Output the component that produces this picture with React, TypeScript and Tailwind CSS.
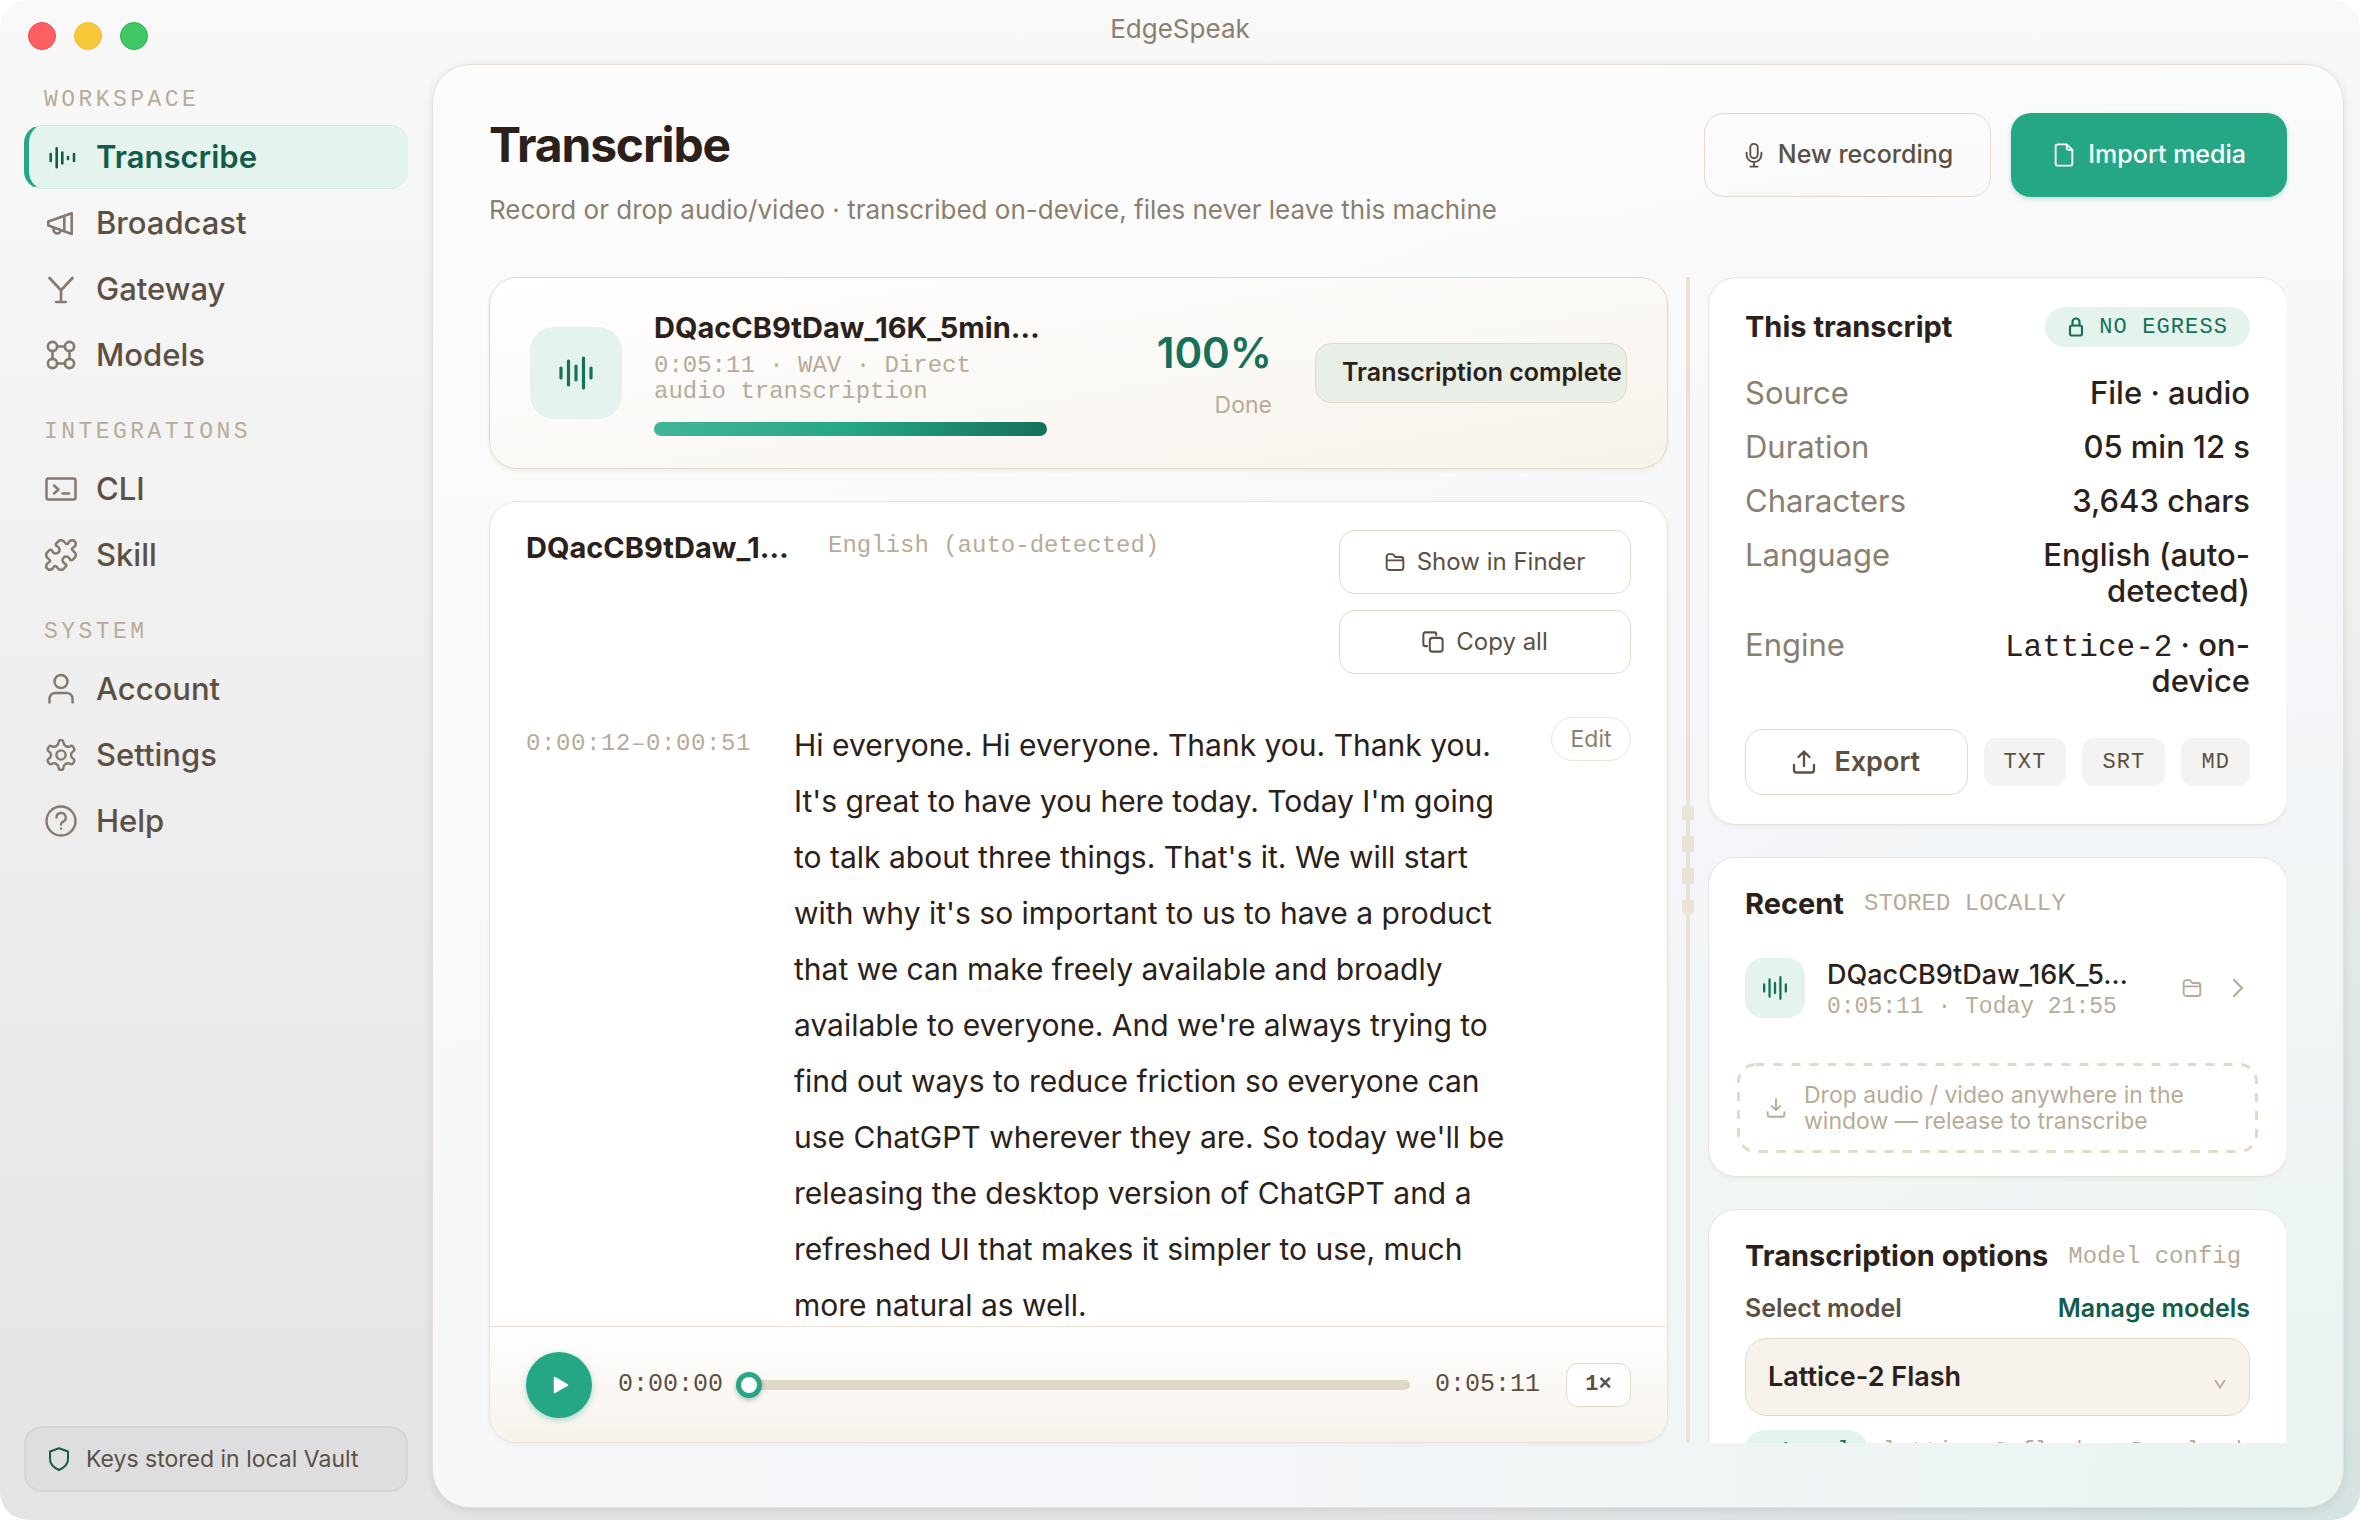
import React from "react";

type IconProps = { className?: string };

const base = {
  fill: "none",
  stroke: "currentColor",
  strokeLinecap: "round" as const,
  strokeLinejoin: "round" as const,
  "aria-hidden": true,
};

const WaveSmall = ({ className }: IconProps) => (
  <svg {...base} viewBox="0 0 32 32" strokeWidth="2.6" className={className}>
    <path d="M5.700 13v7M11.700 7.300v19M17.300 11.500v11M23 16v2M29 13v7" />
  </svg>
);

const Wave = ({ className }: IconProps) => (
  <svg {...base} viewBox="0 0 36 36" strokeWidth="3.2" className={className}>
    <path d="M3 13v10M10.500 6v24M18 11v14M25.500 3v30M33 13v10" />
  </svg>
);

const Megaphone = ({ className }: IconProps) => (
  <svg {...base} viewBox="0 0 32 32" strokeWidth="2.6" className={className}>
    <path d="M26.700 6.300v20.700L3.300 18.500v-4zM19.300 9v15.300" />
    <path d="M8.600 20.800v1.700a3.600 3.600 0 0 0 7.200.700" />
  </svg>
);

const GatewayIcon = ({ className }: IconProps) => (
  <svg {...base} viewBox="0 0 32 32" strokeWidth="2.7" className={className}>
    <path d="M4.500 5 16 17.200 27.500 5M16 17.200V29M11.200 29h9.600" />
  </svg>
);

const ModelsIcon = ({ className }: IconProps) => (
  <svg {...base} viewBox="0 0 32 32" strokeWidth="2.600" className={className}>
    <circle cx="7.500" cy="7.500" r="4.600" />
    <circle cx="24.500" cy="7.500" r="4.600" />
    <circle cx="7.500" cy="24.500" r="4.600" />
    <circle cx="24.500" cy="24.500" r="4.600" />
    <path d="M12 7.500h8M12 24.500h8M7.500 12v8M24.500 12v8" />
  </svg>
);

const TerminalIcon = ({ className }: IconProps) => (
  <svg {...base} viewBox="0 0 32 32" strokeWidth="2.500" className={className}>
    <rect x="1.500" y="5.500" width="29" height="21" rx="2" />
    <path d="m9 12.500 4.500 4-4.500 4M17.500 20.500h6.500" />
  </svg>
);

const PuzzleIcon = ({ className }: IconProps) => (
  <svg {...base} viewBox="1.2 1.2 21.600 21.600" strokeWidth="1.700" className={className}>
    <path d="M19.439 7.850c-.049.322.059.648.289.878l1.568 1.568c.470.470.706 1.087.706 1.704s-.235 1.233-.706 1.704l-1.611 1.611a.980.980 0 0 1-.837.276c-.470-.070-.802-.480-.968-.925a2.501 2.501 0 1 0-3.214 3.214c.446.166.855.497.925.968a.979.979 0 0 1-.276.837l-1.610 1.610a2.404 2.404 0 0 1-1.705.707 2.402 2.402 0 0 1-1.704-.706l-1.568-1.568a1.026 1.026 0 0 0-.877-.290c-.493.074-.840.504-1.020.968a2.500 2.500 0 1 1-3.237-3.237c.464-.180.894-.527.967-1.020a1.026 1.026 0 0 0-.289-.877l-1.568-1.568A2.402 2.402 0 0 1 1.998 12c0-.617.236-1.234.706-1.704L4.230 8.770c.240-.240.581-.353.917-.303.515.077.877.528 1.073 1.010a2.500 2.500 0 1 0 3.259-3.259c-.482-.196-.933-.558-1.010-1.073-.050-.336.062-.676.303-.917l1.525-1.525A2.402 2.402 0 0 1 12 1.998c.617 0 1.234.236 1.704.706l1.568 1.568c.230.230.556.338.877.290.493-.074.840-.504 1.020-.968a2.500 2.500 0 1 1 3.237 3.237c-.464.180-.894.527-.967 1.020Z" />
  </svg>
);

const UserIcon = ({ className }: IconProps) => (
  <svg {...base} viewBox="0 0 32 32" strokeWidth="2.500" className={className}>
    <circle cx="16" cy="8.500" r="6.500" />
    <path d="M4.500 29.500v-4a5.500 5.500 0 0 1 5.500-5.500h12a5.500 5.500 0 0 1 5.500 5.500v4" />
  </svg>
);

const GearIcon = ({ className }: IconProps) => (
  <svg {...base} viewBox="0 0 32 32" strokeWidth="2.400" className={className}>
    <circle cx="16" cy="16" r="4.600" />
    <path d="M13.600 3.400a2.400 2.400 0 0 1 4.800 0c.1 1.800.9 2.900 2.300 3.700s2.800.900 4.300.200a2.500 2.500 0 0 1 3.400.900l.5.900a2.500 2.500 0 0 1-.9 3.400c-1.400.900-2 2-2 3.500s.600 2.600 2 3.500a2.500 2.500 0 0 1 .9 3.400l-.5.900a2.500 2.500 0 0 1-3.400.900c-1.500-.700-2.900-.600-4.300.200s-2.200 1.900-2.300 3.700a2.400 2.400 0 0 1-4.800 0c-.1-1.800-.9-2.900-2.300-3.700s-2.800-.900-4.300-.200a2.500 2.500 0 0 1-3.400-.900l-.5-.900a2.500 2.500 0 0 1 .9-3.400c1.400-.900 2-2 2-3.500s-.600-2.600-2-3.500a2.500 2.500 0 0 1-.9-3.400l.5-.900a2.500 2.500 0 0 1 3.400-.900c1.500.700 2.900.600 4.300-.200s2.200-1.900 2.300-3.700Z" />
  </svg>
);

const HelpIcon = ({ className }: IconProps) => (
  <svg {...base} viewBox="0 0 32 32" strokeWidth="2.400" className={className}>
    <circle cx="16" cy="16" r="14.500" />
    <path d="M11.500 12.500a4.600 4.600 0 1 1 6.700 4.100c-1.500.800-2.200 1.400-2.200 2.900M16 23.500v.100" />
  </svg>
);

const ShieldIcon = ({ className }: IconProps) => (
  <svg {...base} viewBox="0 0 24 24" strokeWidth="2" className={className}>
    <path d="m12 1.300 9 3.200v7.500c0 5-3.500 8.500-9 11-5.500-2.500-9-6-9-11v-7.500z" />
  </svg>
);

const MicIcon = ({ className }: IconProps) => (
  <svg {...base} viewBox="0 0 24 28" strokeWidth="2" className={className}>
    <rect x="8" y="2" width="8" height="15.500" rx="4" />
    <path d="M4 11.500v2a8 8 0 0 0 16 0v-2M12 22v4M8 26.500h8" />
  </svg>
);

const FileIcon = ({ className }: IconProps) => (
  <svg {...base} viewBox="0 0 24 28" strokeWidth="2" className={className}>
    <path d="M15 2.500H5a2 2 0 0 0-2 2v19a2 2 0 0 0 2 2h14a2 2 0 0 0 2-2V8.500zV6.500a2 2 0 0 0 2 2H21" />
  </svg>
);

const FolderIcon = ({ className }: IconProps) => (
  <svg {...base} viewBox="0 0 24 24" strokeWidth="2.300" className={className}>
    <path d="M2 18.500v-13a3 3 0 0 1 3-3h3.500a2 2 0 0 1 1.600.800l1.400 1.900a2 2 0 0 0 1.600.800H19a3 3 0 0 1 3 3v9.500a3 3 0 0 1-3 3H5a3 3 0 0 1-3-3ZM2 10h20" />
  </svg>
);

const CopyIcon = ({ className }: IconProps) => (
  <svg {...base} viewBox="0 0 24 24" strokeWidth="2.200" className={className}>
    <rect x="8.500" y="7.500" width="14" height="15" rx="3" />
    <path d="M5.500 16.500h-2a2 2 0 0 1-2-2v-11a2 2 0 0 1 2-2h10a2 2 0 0 1 2 2v1" />
  </svg>
);

const LockIcon = ({ className }: IconProps) => (
  <svg {...base} viewBox="0 0 18 20" strokeWidth="2.200" className={className}>
    <rect x="3" y="8.500" width="12" height="10" rx="2" />
    <path d="M5.500 8.500V5a3.500 3.500 0 0 1 7 0v3.500" />
  </svg>
);

const UploadIcon = ({ className }: IconProps) => (
  <svg {...base} viewBox="0 0 24 24" strokeWidth="2.300" className={className}>
    <path d="M12 16V2M6.500 7 12 1.500 17.500 7M2 15v5a2.500 2.500 0 0 0 2.500 2.500h15A2.500 2.500 0 0 0 22 20v-5" />
  </svg>
);

const DownloadIcon = ({ className }: IconProps) => (
  <svg {...base} viewBox="0 0 24 24" strokeWidth="2.300" className={className}>
    <path d="M12 1.500v12.500M7 9.500l5 5 5-5M2 17v3a2.500 2.500 0 0 0 2.500 2.500h15A2.500 2.500 0 0 0 22 20v-3" />
  </svg>
);

const ChevronIcon = ({ className }: IconProps) => (
  <svg {...base} viewBox="0 0 12 20" strokeWidth="2.200" className={className}>
    <path d="m2 2 8 8-8 8" />
  </svg>
);

const navGroups = [
  {
    label: "WORKSPACE",
    items: [
      { name: "Transcribe", Icon: WaveSmall, active: true },
      { name: "Broadcast", Icon: Megaphone, active: false },
      { name: "Gateway", Icon: GatewayIcon, active: false },
      { name: "Models", Icon: ModelsIcon, active: false },
    ],
  },
  {
    label: "INTEGRATIONS",
    items: [
      { name: "CLI", Icon: TerminalIcon, active: false },
      { name: "Skill", Icon: PuzzleIcon, active: false },
    ],
  },
  {
    label: "SYSTEM",
    items: [
      { name: "Account", Icon: UserIcon, active: false },
      { name: "Settings", Icon: GearIcon, active: false },
      { name: "Help", Icon: HelpIcon, active: false },
    ],
  },
];

const mono = "font-['Liberation_Mono',monospace]";

function Sidebar() {
  return (
    <aside className="flex w-[432px] shrink-0 flex-col px-6 pb-4">
      <nav className="flex flex-col gap-8 pt-[23px]">
        {navGroups.map((group) => (
          <section key={group.label}>
            <h2 className={`${mono} mb-3 px-5 text-[23px] leading-[26px] tracking-[0.15em] text-[#b8ab98]`}>
              {group.label}
            </h2>
            <ul className="flex flex-col gap-0.5">
              {group.items.map(({ name, Icon, active }) => (
                <li key={name}>
                  <a
                    href="#"
                    aria-current={active ? "page" : undefined}
                    className={
                      active
                        ? "flex h-16 items-center gap-[19px] rounded-[18px] border-y border-l-[5px] border-y-[#d3ece4] border-l-[#25a786] bg-[#e5f3ee] pl-4 text-[31px] font-semibold text-[#125c49]"
                        : "flex h-16 items-center gap-[19px] pl-[21px] text-[31px] font-medium text-[#5c5044]"
                    }
                  >
                    <Icon className={active ? "size-8" : "size-8 text-[#857a6d]"} />
                    {name}
                  </a>
                </li>
              ))}
            </ul>
          </section>
        ))}
      </nav>
      <div className="mt-auto flex h-[66px] items-center gap-[15px] rounded-[18px] border-2 border-[#d5d5d7] bg-[#dedee1] px-[21px] text-[23px] text-[#5c5044]">
        <ShieldIcon className="size-6 text-[#125c49]" />
        Keys stored in local Vault
      </div>
    </aside>
  );
}

function StatusCard() {
  return (
    <section className="flex h-48 shrink-0 items-center rounded-[28px] border border-[#e3d9c8] bg-linear-to-br from-white via-[#fbf9f6] to-[#f7f2ea] px-10 shadow-[0_2px_4px_rgba(60,40,20,0.06)]">
      <div className="flex size-[92px] shrink-0 items-center justify-center rounded-3xl bg-[#e5f3ee] text-[#16715a]">
        <Wave className="size-9" />
      </div>
      <div className="ml-8 w-[393px] shrink-0">
        <h2 className="text-[29px] leading-[36px] font-bold whitespace-nowrap">DQacCB9tDaw_16K_5min…</h2>
        <p className={`${mono} mt-[7px] text-[24px] leading-[26px] text-[#b8ab98]`}>
          0:05:11 · WAV · Direct audio transcription
        </p>
        <div
          role="progressbar"
          aria-label="Transcription progress"
          aria-valuenow={100}
          className="mt-[17px] h-3.5 rounded-full bg-linear-to-r from-[#42b497] via-[#25a786] to-[#16715a]"
        />
      </div>
      <div className="ml-auto text-right">
        <div className="text-[42px] leading-[52px] font-semibold text-[#16715a]">100%</div>
        <div className="mt-3 text-[23px] leading-[28px] text-[#b8ab98]">Done</div>
      </div>
      <div className="ml-[43px] flex h-[60px] w-[312px] shrink-0 items-center rounded-2xl border border-[#e3d9c8] bg-[#e8efe7] pl-[26px] text-[25px] font-semibold whitespace-nowrap">
        Transcription complete
      </div>
    </section>
  );
}

function Player() {
  return (
    <div className="flex h-[116px] shrink-0 items-center border-t border-[#ebe1d6] bg-linear-to-b from-white to-[#f7f2eb] px-9">
      <button
        type="button"
        aria-label="Play"
        className="flex size-[66px] shrink-0 items-center justify-center rounded-full bg-[#25a786] text-white shadow-[0_2px_6px_rgba(37,167,134,0.4)]"
      >
        <svg viewBox="0 0 16 18" className="ml-1 h-[18px] w-4" aria-hidden="true">
          <path d="M1.500 1.500v15L14.500 9z" fill="currentColor" stroke="currentColor" strokeWidth="1.500" strokeLinejoin="round" />
        </svg>
      </button>
      <span className={`${mono} ml-[26px] text-[25px] text-[#5c5044]`}>0:00:00</span>
      <input
        type="range"
        aria-label="Playback position"
        min={0}
        max={311}
        defaultValue={0}
        className="mx-[13px] h-7 min-w-0 flex-1 appearance-none bg-transparent [&::-webkit-slider-runnable-track]:h-2.5 [&::-webkit-slider-runnable-track]:rounded-full [&::-webkit-slider-runnable-track]:bg-[#e2d8c8] [&::-webkit-slider-thumb]:-mt-2 [&::-webkit-slider-thumb]:size-[26px] [&::-webkit-slider-thumb]:appearance-none [&::-webkit-slider-thumb]:rounded-full [&::-webkit-slider-thumb]:border-[5px] [&::-webkit-slider-thumb]:border-solid [&::-webkit-slider-thumb]:border-[#25a786] [&::-webkit-slider-thumb]:bg-white [&::-webkit-slider-thumb]:shadow-[0_2px_5px_rgba(0,0,0,0.25)]"
      />
      <span className={`${mono} ml-3 text-[25px] text-[#5c5044]`}>0:05:11</span>
      <button
        type="button"
        className={`${mono} ml-[26px] h-11 w-[65px] rounded-xl border border-[#e3d9c8] bg-white text-[22px] font-bold text-[#5c5044]`}
      >
        1×
      </button>
    </div>
  );
}

function TranscriptCard() {
  return (
    <section className="flex min-h-0 flex-1 flex-col overflow-hidden rounded-[28px] border border-[#ebe3d8] bg-white shadow-[0_2px_4px_rgba(60,40,20,0.05)]">
      <header className="flex items-start px-9 pt-7">
        <h2 className="w-[266px] shrink-0 text-[29px] leading-[36px] font-bold whitespace-nowrap">DQacCB9tDaw_1…</h2>
        <p className={`${mono} ml-9 text-[24px] leading-[32px] text-[#b8ab98]`}>English (auto-detected)</p>
        <div className="ml-auto flex w-[292px] shrink-0 flex-col gap-4">
          <button
            type="button"
            className="flex h-16 items-center justify-center gap-3 rounded-2xl border border-[#e3d9c8] text-2xl text-[#5c5044]"
          >
            <FolderIcon className="size-5" />
            Show in Finder
          </button>
          <button
            type="button"
            className="flex h-16 items-center justify-center gap-3 rounded-2xl border border-[#e3d9c8] text-2xl text-[#5c5044]"
          >
            <CopyIcon className="size-[22px]" />
            Copy all
          </button>
        </div>
      </header>
      <div className="flex min-h-0 flex-1 items-start overflow-hidden px-9 pt-[43px]">
        <time className={`${mono} mt-3.5 w-[268px] shrink-0 text-[24px] leading-[26px] tracking-wide text-[#b8ab98]`}>
          0:00:12–0:00:51
        </time>
        <p className="min-w-0 flex-1 text-[30px] leading-[56px] text-[#2b211a]">
          Hi everyone. Hi everyone. Thank you. Thank you. It's great to have you here today. Today I'm going to talk
          about three things. That's it. We will start with why it's so important to us to have a product that we can
          make freely available and broadly available to everyone. And we're always trying to find out ways to reduce
          friction so everyone can use ChatGPT wherever they are. So today we'll be releasing the desktop version of
          ChatGPT and a refreshed UI that makes it simpler to use, much more natural as well.
        </p>
        <button
          type="button"
          className="ml-7 h-11 w-20 shrink-0 rounded-full border border-[#ebe3d8] text-[23px] text-[#8b7f70]"
        >
          Edit
        </button>
      </div>
      <Player />
    </section>
  );
}

function Splitter() {
  return (
    <div role="separator" aria-orientation="vertical" className="flex flex-col items-center justify-center">
      <span className="w-1 flex-1 bg-[#ebe3d8]" />
      <span className="h-4 w-3 rounded-t-md bg-[#ebe3d8]" />
      <span className="h-4 w-1 bg-[#ebe3d8]" />
      <span className="h-4 w-3 bg-[#ebe3d8]" />
      <span className="h-4 w-1 bg-[#ebe3d8]" />
      <span className="h-4 w-3 bg-[#ebe3d8]" />
      <span className="h-4 w-1 bg-[#ebe3d8]" />
      <span className="h-4 w-3 rounded-b-md bg-[#ebe3d8]" />
      <span className="w-1 flex-1 bg-[#ebe3d8]" />
    </div>
  );
}

const details: { label: string; value: React.ReactNode }[] = [
  { label: "Source", value: "File · audio" },
  { label: "Duration", value: "05 min 12 s" },
  { label: "Characters", value: "3,643 chars" },
  { label: "Language", value: "English (auto-detected)" },
  {
    label: "Engine",
    value: (
      <>
        <span className={`${mono} leading-none`}>Lattice-2</span> · on-device
      </>
    ),
  },
];

const sideCard =
  "-mr-0.5 shrink-0 rounded-[28px] border border-[#ebe3d8] bg-white pl-9 pr-[37px] shadow-[0_2px_4px_rgba(60,40,20,0.05)]";

function SidePanels() {
  return (
    <div className="flex min-h-0 flex-col gap-8 overflow-hidden">
      <section className={`${sideCard} py-[29px]`}>
        <header className="flex h-10 items-center justify-between">
          <h2 className="text-[29px] font-bold">This transcript</h2>
          <span
            className={`${mono} flex h-10 items-center gap-3.5 rounded-full bg-[#e5f3ee] px-[22px] text-[22px] tracking-wider text-[#16715a]`}
          >
            <LockIcon className="h-5 w-[18px]" />
            NO EGRESS
          </span>
        </header>
        <dl className="mt-[28px] flex flex-col gap-[18px] text-[31px] leading-[36px]">
          {details.map((d) => (
            <div key={d.label} className="flex justify-between">
              <dt className="text-[#8b7f70]">{d.label}</dt>
              <dd className="w-[260px] text-right font-medium">{d.value}</dd>
            </div>
          ))}
        </dl>
        <div className="mt-[30px] flex items-center gap-4">
          <button
            type="button"
            className="flex h-[66px] flex-1 items-center justify-center gap-[18px] rounded-[18px] border border-[#e3d9c8] text-[27px] font-semibold text-[#5c5044]"
          >
            <UploadIcon className="size-6" />
            Export
          </button>
          {["TXT", "SRT", "MD"].map((f) => (
            <button
              key={f}
              type="button"
              className={`${mono} h-12 rounded-xl bg-[#f3f3f1] px-5 text-[22px] tracking-wider text-[#5c5044]`}
            >
              {f}
            </button>
          ))}
        </div>
      </section>

      <section className={`${sideCard} pt-7 pb-[23px]`}>
        <header className="flex items-center gap-5">
          <h2 className="text-[29px] leading-[36px] font-bold">Recent</h2>
          <span className={`${mono} text-[24px] leading-[26px] text-[#b8ab98]`}>STORED LOCALLY</span>
        </header>
        <div className="mt-9 flex h-[60px] items-center">
          <div className="flex size-[60px] shrink-0 items-center justify-center rounded-[18px] bg-[#e5f3ee] text-[#16715a]">
            <Wave className="size-[26px]" />
          </div>
          <div className="ml-[22px] w-[310px] shrink-0 pt-1">
            <div className="text-[27px] leading-[34px] font-medium whitespace-nowrap">DQacCB9tDaw_16K_5…</div>
            <div className={`${mono} text-[23px] leading-[30px] whitespace-nowrap text-[#b8ab98]`}>
              0:05:11 · Today 21:55
            </div>
          </div>
          <button type="button" aria-label="Show in Finder" className="ml-auto text-[#b8ab98]">
            <FolderIcon className="size-5" />
          </button>
          <button type="button" aria-label="Open transcript" className="mx-[6px] pl-6 text-[#b8ab98]">
            <ChevronIcon className="h-5 w-3" />
          </button>
        </div>
        <div className="relative -mx-2 mt-[45px] flex h-[90px] items-center gap-[18px] px-[29px] text-[23px] leading-[26px] text-[#b8ab98]">
          <svg className="absolute inset-0 size-full" fill="none" aria-hidden="true">
            <rect
              x="1.500"
              y="1.500"
              rx="17"
              className="h-[calc(100%-3px)] w-[calc(100%-3px)]"
              stroke="#e3d9c8"
              strokeWidth="3"
              strokeDasharray="9 9"
            />
          </svg>
          <DownloadIcon className="size-5 shrink-0" />
          <p>Drop audio / video anywhere in the window — release to transcribe</p>
        </div>
      </section>

      <section className={`${sideCard} pt-7 pb-9`}>
        <header className="flex items-center gap-5">
          <h2 className="text-[29px] leading-[36px] font-bold whitespace-nowrap">Transcription options</h2>
          <span className={`${mono} pt-0.5 text-[24px] leading-[26px] whitespace-nowrap text-[#b8ab98]`}>Model config</span>
        </header>
        <div className="mt-4 flex items-center justify-between text-[25px] leading-[36px] font-semibold">
          <label htmlFor="model" className="text-[#5c5044]">
            Select model
          </label>
          <a href="#" className="text-[#125c49]">
            Manage models
          </a>
        </div>
        <div className="relative mt-3">
          <select
            id="model"
            defaultValue="flash"
            className="h-[78px] w-full appearance-none rounded-[22px] border border-[#e3d9c8] bg-[#f7f2ec] px-[22px] text-[27px] font-semibold"
          >
            <option value="flash">Lattice-2 Flash</option>
          </select>
          <svg viewBox="0 0 12 10" className="pointer-events-none absolute top-[41px] right-[24px] h-2.5 w-3" aria-hidden="true">
            <path d="M1 1 6 8.500 11 1" fill="none" stroke="#b8ab98" strokeWidth="1.800" />
          </svg>
        </div>
        <div className="mt-3.5 flex items-center gap-[15px] whitespace-nowrap">
          <span className={`${mono} flex h-10 items-center gap-2.5 rounded-full bg-[#e5f3ee] px-[17px] pt-1 text-[23px] text-[#16715a]`}>
            <span className="size-2.5 rounded-full bg-[#25a786]" />
            Local
          </span>
          <span className={`${mono} pt-1 text-[23px] text-[#b8ab98]`}>lattice-2-flash · Download…</span>
        </div>
      </section>
    </div>
  );
}

export default function App() {
  return (
    <div className="flex h-screen flex-col overflow-hidden rounded-[28px] bg-[radial-gradient(ellipse_45%_60%_at_bottom_right,#d6e3e3_0%,transparent_100%),linear-gradient(to_bottom,#f9f9f9,#eeeeef_50%,#e4e4e7)] font-['Inter',sans-serif] text-[#2b211a]">
      <div className="grid h-16 shrink-0 grid-cols-[1fr_auto_1fr] items-start px-7">
        <div className="flex gap-[18px] pt-[22px]">
          <button type="button" aria-label="Close" className="size-7 rounded-full border border-[#f04a50] bg-[#ff5e62]" />
          <button type="button" aria-label="Minimize" className="size-7 rounded-full border border-[#f0b92b] bg-[#f9c83a]" />
          <button type="button" aria-label="Zoom" className="size-7 rounded-full border border-[#22b84b] bg-[#3fc864]" />
        </div>
        <h1 className="pt-3 text-[26px] leading-[34px] text-[#8b7f70]">EdgeSpeak</h1>
      </div>
      <div className="flex min-h-0 flex-1 pr-4 pb-3">
        <Sidebar />
        <main className="flex min-w-0 flex-1 flex-col rounded-[38px] border border-[#e6dfd6] bg-[radial-gradient(ellipse_at_bottom_right,#eaf4f2_0%,#f5f6f9_45%,transparent_75%),linear-gradient(to_bottom,#fcfcfc,#f7f7f9)] px-14 pt-12 pb-16 shadow-[0_2px_10px_rgba(60,50,40,0.12)]">
          <header className="flex items-start justify-between">
            <div>
              <h2 className="text-[48px] leading-[64px] font-bold tracking-tight">Transcribe</h2>
              <p className="mt-4 text-[26px] leading-[34px] text-[#8b7f70]">
                Record or drop audio/video · transcribed on-device, files never leave this machine
              </p>
            </div>
            <div className="flex gap-5">
              <button
                type="button"
                className="flex h-[84px] items-center gap-3 rounded-[20px] border border-[#e3d9c8] px-[37px] text-[25px] font-medium text-[#5c5044]"
              >
                <MicIcon className="h-[26px] w-6" />
                New recording
              </button>
              <button
                type="button"
                className="flex h-[84px] items-center gap-3 rounded-[20px] bg-[#25a786] px-[41px] text-[25px] font-medium text-white shadow-[0_2px_5px_rgba(37,167,134,0.3)]"
              >
                <FileIcon className="h-[26px] w-6" />
                Import media
              </button>
            </div>
          </header>
          <div className="mt-[50px] mr-px grid min-h-0 flex-1 grid-cols-[minmax(0,1fr)_40px_578px] grid-rows-[minmax(0,1fr)]">
            <div className="flex min-h-0 flex-col gap-8">
              <StatusCard />
              <TranscriptCard />
            </div>
            <Splitter />
            <SidePanels />
          </div>
        </main>
      </div>
    </div>
  );
}
